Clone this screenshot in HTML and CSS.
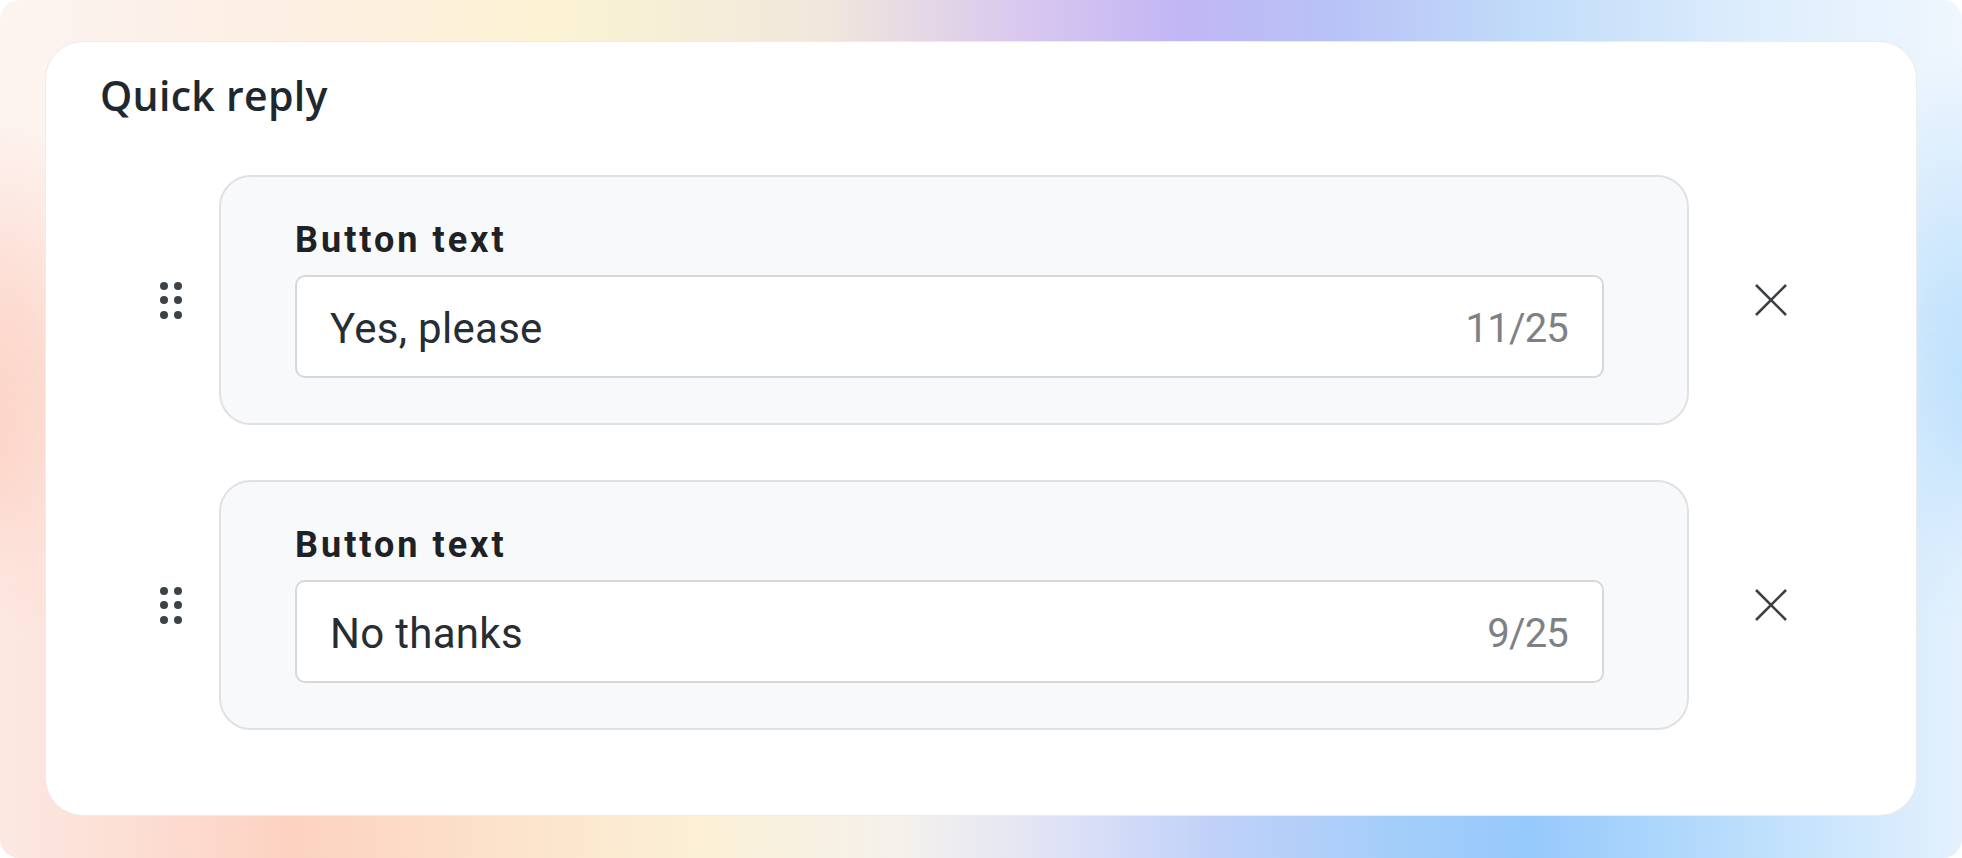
FILE: index.html
```html
<!DOCTYPE html>
<html lang="en">
<head>
<meta charset="utf-8">
<title>Quick reply</title>
<link rel="stylesheet" href="styles.css">
</head>
<body>
<div class="frame">
  <div class="panel">
    <h1 class="title">Quick reply</h1>
    <div class="rows">
      <div class="row">
        <div class="handle" aria-hidden="true">
          <span></span><span></span><span></span><span></span><span></span><span></span>
        </div>
        <div class="item">
          <div class="label">Button text</div>
          <div class="field">
            <span class="value">Yes, please</span>
            <span class="count">11/25</span>
          </div>
        </div>
        <button class="remove" aria-label="Remove">
          <svg viewBox="0 0 34 34" width="34" height="34"><path d="M2 2 L32 32 M32 2 L2 32" stroke="#3c4043" stroke-width="2.6" fill="none" stroke-linecap="butt"/></svg>
        </button>
      </div>
      <div class="row">
        <div class="handle" aria-hidden="true">
          <span></span><span></span><span></span><span></span><span></span><span></span>
        </div>
        <div class="item">
          <div class="label">Button text</div>
          <div class="field">
            <span class="value">No thanks</span>
            <span class="count">9/25</span>
          </div>
        </div>
        <button class="remove" aria-label="Remove">
          <svg viewBox="0 0 34 34" width="34" height="34"><path d="M2 2 L32 32 M32 2 L2 32" stroke="#3c4043" stroke-width="2.6" fill="none" stroke-linecap="butt"/></svg>
        </button>
      </div>
    </div>
  </div>
</div>
</body>
</html>
```

FILE: styles.css
```css
html, body {
  margin: 0;
  padding: 0;
  background: #ffffff;
}

.frame {
  position: relative;
  width: 1962px;
  height: 858px;
  box-sizing: border-box;
  padding: 41px 45px 42px 45px;
  border-radius: 20px;
  overflow: hidden;
  background:
    radial-gradient(ellipse 130px 360px at 0% 55%, rgba(252, 196, 178, 0.95), rgba(252, 196, 178, 0) 100%),
    radial-gradient(ellipse 120px 380px at 100% 50%, rgba(170, 216, 252, 0.9), rgba(170, 216, 252, 0) 100%),
    linear-gradient(to right, #fdf4f1 0%, #fcefe4 14%, #fbf3d3 28%, #f1e7dc 42%, #d9c8ef 52%, #c2b6f5 60%, #b8c2f6 68%, #c2dcf9 78%, #dfeefc 90%, #eff6fe 100%);
}

.frame::before {
  content: "";
  position: absolute;
  inset: 0;
  background: linear-gradient(to right, #fce8e2 0%, #fcd2c1 15%, #fce3cb 26%, #fbf0d6 36%, #f4f1ec 46%, #dfe2f6 54%, #bfd1f8 62%, #a2cdfa 72%, #96c9fb 78%, #bfe0fc 90%, #e4f1fd 100%);
  -webkit-mask-image: linear-gradient(to bottom, transparent 35%, black 75%);
  mask-image: linear-gradient(to bottom, transparent 35%, black 75%);
}

.panel {
  position: relative;
  height: 100%;
  box-sizing: border-box;
  background: #ffffff;
  border: 1px solid rgba(120, 110, 130, 0.14);
  border-radius: 38px;
  padding: 26px 54px 0 54px;
}

.title {
  margin: 0;
  font-family: "Open Sans", "Noto Sans", sans-serif;
  font-weight: 600;
  font-size: 41px;
  line-height: 54px;
  letter-spacing: 0.3px;
  color: #1f282e;
}

.rows {
  display: flex;
  flex-direction: column;
  gap: 55px;
  margin-top: 53px;
  padding-left: 60px;
}

.row {
  display: flex;
  align-items: center;
}

.handle {
  width: 24px;
  display: grid;
  grid-template-columns: 8px 8px;
  grid-auto-rows: 8px;
  column-gap: 6px;
  row-gap: 6.5px;
  margin-right: 35px;
}

.handle span {
  width: 8px;
  height: 8px;
  border-radius: 50%;
  background: #3c4348;
}

.item {
  width: 1470px;
  height: 250px;
  box-sizing: border-box;
  background: #f8f9fa;
  border: 2px solid #dfe1e4;
  border-radius: 32px;
  padding: 42px 83px 0 74px;
}

.label {
  font-family: Roboto, "Liberation Sans", sans-serif;
  font-weight: 700;
  font-size: 36px;
  line-height: 42px;
  letter-spacing: 3px;
  color: #202124;
}

.field {
  margin-top: 14px;
  height: 103px;
  box-sizing: border-box;
  background: #ffffff;
  border: 2px solid #d6d9dc;
  border-radius: 10px;
  padding: 4px 34px 0 33px;
  display: flex;
  align-items: center;
  justify-content: space-between;
  font-family: Roboto, "Liberation Sans", sans-serif;
  font-size: 42px;
}

.value {
  color: #262d33;
  letter-spacing: 0.3px;
}

.count {
  color: #7d8185;
  font-size: 40px;
  letter-spacing: -0.8px;
}

.remove {
  margin-left: 65px;
  width: 34px;
  height: 34px;
  padding: 0;
  border: 0;
  background: transparent;
  display: flex;
}
```
